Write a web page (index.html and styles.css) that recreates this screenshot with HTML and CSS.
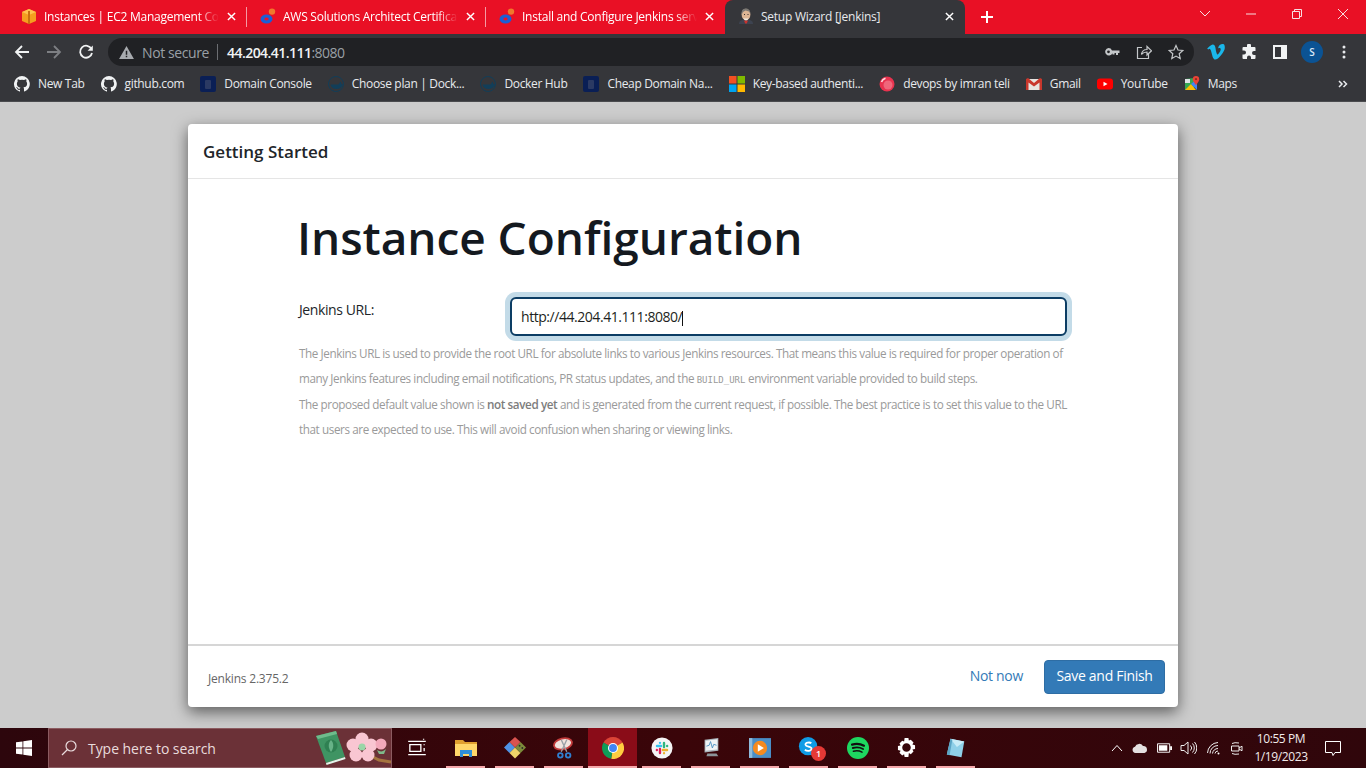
FILE: index.html
```html
<!DOCTYPE html>
<html lang="en">
<head>
<meta charset="utf-8">
<title>Setup Wizard [Jenkins]</title>
<link rel="stylesheet" href="styles.css">
</head>
<body>
<div class="browser">
  <div class="tabbar">
    <div class="tab">
      <svg class="fav" viewBox="0 0 16 16"><path fill="#f59e1f" d="M1 4l7-3 7 3v9l-7 3-7-3z"/><path fill="#ffc14d" d="M1 4l7-3 7 3-7 3z"/><path fill="#c9700f" d="M7 3h2v13H7z"/></svg>
      <span class="tab-title">Instances | EC2 Management Console</span>
      <svg class="tab-x" viewBox="0 0 10 10"><path d="M1 1l8 8M9 1l-8 8"/></svg>
    </div>
    <i class="tab-sep"></i>
    <div class="tab">
      <svg class="fav" viewBox="0 0 16 16"><ellipse cx="6.500" cy="11" rx="6" ry="4.600" fill="#1a5fd6"/><ellipse cx="6.500" cy="11" rx="2.200" ry="1.400" fill="#e9122a"/><circle cx="12" cy="3.600" r="3.200" fill="#f0772b"/></svg>
      <span class="tab-title">AWS Solutions Architect Certification Training</span>
      <svg class="tab-x" viewBox="0 0 10 10"><path d="M1 1l8 8M9 1l-8 8"/></svg>
    </div>
    <i class="tab-sep"></i>
    <div class="tab">
      <svg class="fav" viewBox="0 0 16 16"><ellipse cx="6.500" cy="11" rx="6" ry="4.600" fill="#1a5fd6"/><ellipse cx="6.500" cy="11" rx="2.200" ry="1.400" fill="#e9122a"/><circle cx="12" cy="3.600" r="3.200" fill="#f0772b"/></svg>
      <span class="tab-title">Install and Configure Jenkins server</span>
      <svg class="tab-x" viewBox="0 0 10 10"><path d="M1 1l8 8M9 1l-8 8"/></svg>
    </div>
    <div class="tab tab-active">
      <svg class="fav" viewBox="0 0 16 16"><path fill="#3d4350" d="M1 16c0-3 2-4.500 7-4.500s7 1.500 7 4.500z"/><path fill="#c8322d" d="M6 12.500h4l-1.200 3H7.200z"/><ellipse cx="8" cy="6.500" rx="4.400" ry="5.800" fill="#dcb594"/><path fill="#7d7a75" d="M3.600 7C3.300 3 4.500.8 7.500.6 10.500.5 12.400 2.500 12.400 6L11 3.500 7.500 2.500 5 4z"/><path fill="#efe8dd" d="M5.500 10c1.500.8 3.500.8 5 0-.4 1.800-1.100 2.300-2.500 2.300S5.900 11.800 5.500 10z"/><path fill="#3a3330" d="M6 6h1v1H6zM9.500 6h1v1h-1z"/></svg>
      <span class="tab-title tab-title-full">Setup Wizard [Jenkins]</span>
      <svg class="tab-x" viewBox="0 0 10 10"><path d="M1 1l8 8M9 1l-8 8"/></svg>
    </div>
    <svg class="new-tab" viewBox="0 0 14 14"><path d="M7 1v12M1 7h12"/></svg>
    <div class="win-controls">
      <svg class="win" viewBox="0 0 46 14"><path d="M18 4l5 5 5-5"/></svg>
      <svg class="win" viewBox="0 0 46 14"><path d="M18 7h10"/></svg>
      <svg class="win" viewBox="0 0 46 14"><path d="M18.500 4.500h7v7h-7zM20.500 4.500v-2h7v7h-2"/></svg>
      <svg class="win" viewBox="0 0 46 14"><path d="M18 2l10 10M28 2L18 12"/></svg>
    </div>
  </div>

  <div class="toolbar">
    <svg class="nav" viewBox="0 0 16 16"><path d="M15 8H2M8 2L2 8l6 6"/></svg>
    <svg class="nav nav-off" viewBox="0 0 16 16"><path d="M1 8h13M8 2l6 6-6 6"/></svg>
    <svg class="nav" viewBox="0 0 16 16"><path d="M13.500 5A6 6 0 1 0 14 9"/><path class="solid" d="M14.800 1.500v5.200H9.600z"/></svg>
    <div class="omnibox">
      <svg class="warn" viewBox="0 0 16 14"><path fill-rule="evenodd" d="M8 0l8 14H0zM7.200 5v4.500h1.600V5zm0 5.500V12h1.600v-1.500z"/></svg>
      <span class="not-secure">Not secure</span>
      <i class="omni-sep"></i>
      <span class="url">44.204.41.111<span class="url-port">:8080</span></span>
      <span class="omni-icons">
        <svg viewBox="0 0 16 16" class="omni-i"><path class="solid" fill-rule="evenodd" d="M4.500 4a3.800 3.800 0 0 1 3.500 2.400h7.500V9H14v2h-2V9h-1.500v1.500h-2V9.300A3.800 3.800 0 1 1 4.500 4zm0 2.400a1.400 1.400 0 1 0 0 2.800 1.400 1.400 0 0 0 0-2.800z"/></svg>
        <svg viewBox="0 0 16 16" class="omni-i"><path class="line" d="M6 3.500H1.500v11h11V10"/><path class="line" d="M5.500 10.500C6 7 8.500 5.500 11 5.500V2.500l4.500 4.300-4.500 4.200V8C9 8 7 8.500 5.500 10.500z"/></svg>
        <svg viewBox="0 0 16 16" class="omni-i"><path class="line" d="M8 1.500l2 4.500 4.800.5-3.600 3.200 1 4.800L8 12.100l-4.200 2.400 1-4.800L1.200 6.500 6 6z"/></svg>
      </span>
    </div>
    <svg class="ext" viewBox="0 0 18 16"><path fill="#1ab7ea" d="M17.800 4c-.1 1.700-1.300 4.100-3.600 7-2.400 3-4.400 4.500-6 4.500-1 0-1.900-.9-2.600-2.800L4.200 7.500C3.700 5.700 3.100 4.700 2.500 4.700c-.1 0-.6.300-1.400.9L.2 4.500C1.100 3.700 2 2.900 2.900 2.100 4.100 1 5 .5 5.600.4c1.500-.1 2.400.9 2.800 3 .4 2.300.6 3.700.8 4.300.4 1.900.9 2.800 1.400 2.800.4 0 1-.6 1.800-1.900.8-1.300 1.200-2.200 1.300-2.900.1-1.100-.3-1.600-1.300-1.600-.5 0-.9.100-1.400.3C11.800 1.300 13.500 0 16 .1c1.300 0 1.900 1.300 1.800 3.900z"/></svg>
    <svg class="ext2" viewBox="0 0 16 16"><path fill="#f1f3f4" d="M6 1.500a2 2 0 0 1 4 0V3h3.500a1 1 0 0 1 1 1v3H13a2 2 0 0 0 0 4h1.500v3a1 1 0 0 1-1 1H10v-1.500a2 2 0 0 0-4 0V15H2.500a1 1 0 0 1-1-1v-3.500H3a2 2 0 0 0 0-4H1.500V4a1 1 0 0 1 1-1H6z"/></svg>
    <svg class="ext3" viewBox="0 0 14 14"><path fill="#f1f3f4" fill-rule="evenodd" d="M0 0h14v14H0zM2 2v10h6V2z"/></svg>
    <span class="avatar">S</span>
    <svg class="kebab" viewBox="0 0 4 14"><circle cx="2" cy="2" r="1.500"/><circle cx="2" cy="7" r="1.500"/><circle cx="2" cy="12" r="1.500"/></svg>
  </div>

  <div class="bookmarks">
    <a class="bm"><svg class="bm-i" viewBox="0 0 16 16"><use href="#gh"/></svg>New Tab</a>
    <a class="bm"><svg class="bm-i" viewBox="0 0 16 16"><use href="#gh"/></svg>github.com</a>
    <a class="bm"><svg class="bm-i" viewBox="0 0 16 16"><use href="#dom"/></svg>Domain Console</a>
    <a class="bm"><svg class="bm-i" viewBox="0 0 16 16"><use href="#dock"/></svg>Choose plan | Dock...</a>
    <a class="bm"><svg class="bm-i" viewBox="0 0 16 16"><use href="#dock"/></svg>Docker Hub</a>
    <a class="bm"><svg class="bm-i" viewBox="0 0 16 16"><use href="#dom"/></svg>Cheap Domain Na...</a>
    <a class="bm"><svg class="bm-i" viewBox="0 0 16 16"><path fill="#f25022" d="M0 0h7.500v7.500H0z"/><path fill="#7fba00" d="M8.500 0H16v7.500H8.500z"/><path fill="#00a4ef" d="M0 8.500h7.500V16H0z"/><path fill="#ffb900" d="M8.500 8.500H16V16H8.500z"/></svg>Key-based authenti...</a>
    <a class="bm"><svg class="bm-i" viewBox="0 0 16 16"><circle cx="8" cy="8" r="7.500" fill="#e8334f"/><circle cx="9" cy="9" r="4.500" fill="#f0677b"/><path d="M2.500 6a6 6 0 0 1 4-3.800" stroke="#fde2e6" stroke-width="1.500" fill="none"/></svg>devops by imran teli</a>
    <a class="bm"><svg class="bm-i" viewBox="0 0 16 16"><path fill="#e8e4e0" d="M1 3h14v11H1z"/><path fill="#c9372c" d="M0 3l2-1 6 5 6-5 2 1v11h-2.500V6.500L8 10.500l-5.500-4V14H0z"/></svg>Gmail</a>
    <a class="bm"><svg class="bm-i" viewBox="0 0 16 16"><rect y="2.500" width="16" height="11" rx="3" fill="#f00"/><path fill="#fff" d="M6.500 5.700L10.500 8l-4 2.300z"/></svg>YouTube</a>
    <a class="bm"><svg class="bm-i" viewBox="0 0 16 16"><path fill="#34a853" d="M1 3l9-1v12H1z"/><path fill="#fbbc04" d="M1 14l6-6 5 6z"/><path fill="#4285f4" d="M7 8l6-5v11z"/><path fill="#dfe3e6" d="M1 3h5v4H1z"/><path fill="#ea4335" d="M12 0a3.200 3.200 0 0 1 3.200 3.200C15.200 5.500 12 9 12 9S8.800 5.500 8.800 3.200A3.200 3.200 0 0 1 12 0z"/><circle cx="12" cy="3.200" r="1.100" fill="#8e2a20"/></svg>Maps</a>
    <svg class="bm-more" viewBox="0 0 10 8"><path d="M1 1l3 3-3 3M5.500 1l3 3-3 3"/></svg>
  </div>
  <svg class="defs" width="0" height="0">
    <defs>
      <path id="gh" fill="#f1f3f4" d="M8 0a8 8 0 0 0-2.500 15.600c.4.100.5-.2.500-.4v-1.400c-2.200.5-2.700-1-2.700-1-.4-.9-.9-1.200-.9-1.200-.7-.5.100-.5.100-.5.800.1 1.200.8 1.200.8.700 1.200 1.900.9 2.300.7.100-.5.300-.9.500-1.100-1.800-.2-3.600-.9-3.600-4 0-.9.300-1.600.8-2.100-.1-.2-.4-1 .1-2.100 0 0 .7-.2 2.200.8a7.600 7.600 0 0 1 4 0c1.500-1 2.200-.8 2.200-.8.400 1.100.2 1.900.1 2.100.5.600.8 1.300.8 2.100 0 3.100-1.900 3.700-3.700 3.900.3.300.6.800.6 1.500v2.200c0 .2.100.5.600.4A8 8 0 0 0 8 0z"/>
      <g id="dom"><rect width="16" height="16" rx="2" fill="#0a1f55"/><rect x="5" y="4" width="6" height="9" rx="1" fill="#2b3a63"/></g>
      <g id="dock"><circle cx="8" cy="8" r="7.500" fill="none" stroke="#123e59" stroke-width="1"/><path fill="#123e59" d="M2.500 8.500h8l2-3 1 2.500 1.500.5c-1 3-3.500 4.500-6.500 4.500-3 0-5.500-1.500-6-4.500z"/></g>
    </defs>
  </svg>

  <main class="page">
    <section class="dialog">
      <header class="dlg-head">Getting Started</header>
      <div class="dlg-body">
        <h1 class="dlg-title">Instance Configuration</h1>
        <div class="url-row">
          <label class="url-label" for="jurl">Jenkins URL:</label>
          <div class="url-field">
            <input class="url-input" id="jurl" value="http://44.204.41.111:8080/">
            <i class="caret"></i>
          </div>
        </div>
        <div class="help">
          <p>The Jenkins URL is used to provide the root URL for absolute links to various Jenkins resources. That means this value is required for proper operation of many Jenkins features including email notifications, PR status updates, and the <code>BUILD_URL</code> environment variable provided to build steps.</p>
          <p>The proposed default value shown is <strong>not saved yet</strong> and is generated from the current request, if possible. The best practice is to set this value to the URL that users are expected to use. This will avoid confusion when sharing or viewing links.</p>
        </div>
      </div>
      <footer class="dlg-foot">
        <span class="version">Jenkins 2.375.2</span>
        <a class="not-now">Not now</a>
        <button class="save">Save and Finish</button>
      </footer>
    </section>
  </main>

  <div class="taskbar">
    <svg class="start" viewBox="0 0 16 16"><path fill="#fff" d="M0 2.300l6.500-.9v6.200H0zM7.300 1.300L16 0v7.600H7.300zM0 8.400h6.500v6.200L0 13.700zM7.300 8.400H16V16l-8.700-1.300z"/></svg>
    <div class="search">
      <svg class="search-i" viewBox="0 0 16 16"><circle cx="10" cy="6" r="5"/><path d="M6.500 9.500L1 15"/></svg>
      <span class="search-t">Type here to search</span>
      <svg class="search-art" viewBox="0 0 76 36"><path d="M52 24l12 6 12 2" stroke="#a5743f" stroke-width="3" fill="none"/><path fill="#3f9463" d="M1 6l20-5 9 26-19 6z"/><path fill="#6fbb8c" d="M1 6l20-5 1 3-19 5z"/><path fill="#e3f5ea" d="M11 33l19-6 .5 2-19 6z"/><circle cx="16" cy="16" r="6.500" fill="#2f8052"/><path fill="#67b287" d="M16 10c3 3 3 8 0 12-3-4-3-9 0-12z"/><g fill="#f9c6d2"><circle cx="47" cy="9" r="6.500"/><circle cx="56" cy="15" r="6.500"/><circle cx="53" cy="25" r="6.500"/><circle cx="41" cy="25" r="6.500"/><circle cx="38" cy="15" r="6.500"/></g><circle cx="47" cy="17" r="3.500" fill="#9ad6a8"/><circle cx="66" cy="14" r="5.500" fill="#f3a9bb"/><path fill="#7fb98a" d="M62 20c3 2 6 2 9-1l-2 5h-5z"/></svg>
    </div>
    <div class="apps">
      <span class="app"><svg viewBox="0 0 20 20"><path class="tl" d="M2 4h16M2 16h16M3.500 7h10v6h-10zM16.500 6.500v1M16.500 10v3M16 1.500v1"/></svg></span>
      <span class="app on"><svg viewBox="0 0 22 20"><path fill="#e0a030" d="M0 2h8l2 2h12v14H0z"/><path fill="#ffd76a" d="M0 6h22v12H0z"/><path fill="#2f8fd8" d="M5 12h12v7h-3v-3H8v3H5z"/></svg></span>
      <span class="app on"><svg viewBox="0 0 24 24"><path fill="#4f93e6" d="M0 11.500L6 5.500l6 6-6 6z"/><path fill="#f0d469" d="M6 17.500l6-6 6 6-6 6z"/><path fill="#7c8a3a" d="M12 11.500l6-6 6 6-6 6z"/><path fill="#d9534f" d="M6 5.500l6-5.500 6 5.500-6 6z"/><circle cx="17" cy="9.500" r="1" fill="#2a2a2a"/><circle cx="20" cy="12" r="1" fill="#2a2a2a"/></svg></span>
      <span class="app on"><svg viewBox="0 0 24 24"><g transform="rotate(-14 11 8)"><ellipse cx="11" cy="7.500" rx="10" ry="6" fill="#f1e4df" stroke="#c23b3b" stroke-width="2"/></g><path d="M9 3l6 13M15 3L9 16" stroke="#9aa0a6" stroke-width="1.500"/><circle cx="8" cy="20" r="2.500" fill="none" stroke="#2f7fd0" stroke-width="2"/><circle cx="16.500" cy="20" r="2.500" fill="none" stroke="#2f7fd0" stroke-width="2"/></svg></span>
      <span class="app on active"><svg viewBox="0 0 24 24"><path fill="#db4437" d="M12 12L1.610 6A12 12 0 0 1 22.390 6z"/><path fill="#ffcd40" d="M12 12L22.390 6A12 12 0 0 1 10 23.830z"/><path fill="#0f9d58" d="M12 12L10 23.830A12 12 0 0 1 1.610 6z"/><circle cx="12" cy="12" r="5.500" fill="#fff"/><circle cx="12" cy="12" r="4.300" fill="#4285f4"/></svg></span>
      <span class="app on"><svg viewBox="0 0 24 24"><circle cx="12" cy="12" r="11.500" fill="#f5f5f5"/><g stroke-width="2.600" stroke-linecap="round" fill="none"><path stroke="#36c5f0" d="M6.500 9.800H11M9.800 6.400v0"/><path stroke="#2eb67d" d="M14.200 6.500V11M17.600 9.800h0"/><path stroke="#ecb22e" d="M13 14.200h4.500M14.200 17.600h0"/><path stroke="#e01e5a" d="M9.800 13v4.500M6.400 14.200h0"/></g></svg></span>
      <span class="app on"><svg viewBox="0 0 24 24"><path fill="#aab4bb" d="M5 3l15-2v14l-15 2z"/><path fill="#f0f3f5" d="M6 4l13-1.500v11L6 15z"/><path d="M7 10l3-1 1.500-4 2 7 1.500-4 3 1" fill="none" stroke="#4a90c2"/><path fill="#8c9499" d="M8 18h10l2 3H7z"/></svg></span>
      <span class="app on"><svg viewBox="0 0 20 20"><path fill="#4a8ec7" d="M0 1h20v18H0z"/><path fill="#8fbbdc" d="M0 1h3v18H0z"/><circle cx="10" cy="10" r="6.500" fill="#f58a1f"/><path fill="#fff" d="M8 6.500l5.500 3.500L8 13.500z"/></svg></span>
      <span class="app on"><svg viewBox="0 0 24 24"><circle cx="11" cy="10" r="10" fill="#0f9ce6"/><path d="M14.500 6.800C13 5.500 7.500 5.800 8.200 8.600c.6 2.500 6.600 1.400 6.600 4.300 0 2.500-5 3-7.300 1" fill="none" stroke="#fff" stroke-width="2"/></svg><b class="badge">1</b></span>
      <span class="app on"><svg viewBox="0 0 24 24"><circle cx="12" cy="12" r="12" fill="#1ed760"/><g fill="none" stroke="#111" stroke-linecap="round"><path stroke-width="2.400" d="M5.500 8.300c4.500-1.300 9-1 13 1.200"/><path stroke-width="2" d="M6.300 12c3.800-1 7.800-.8 11.200 1.100"/><path stroke-width="1.600" d="M7 15.500c3.200-.8 6.500-.6 9.400 1"/></g></svg></span>
      <span class="app on"><svg class="gear" viewBox="0 0 20 20"><path fill="#fff" fill-rule="evenodd" d="M8 0h4l.5 2.700 2-.8 2.900 2.900-1.200 2 2.800.7v4l-2.800.7 1.200 2-2.900 2.900-2-1.200L12 20H8l-.5-2.800-2 1.200-2.900-2.900 1.200-2L1 12.500v-4l2.800-.7-1.200-2 2.900-2.900 2 .8zM10 5.500a4.500 4.500 0 1 0 0 9 4.500 4.500 0 0 0 0-9z"/></svg></span>
      <span class="app on"><svg viewBox="0 0 24 24"><path fill="#8fd0e8" d="M6 2l15 3-3 17L2 19z"/><path fill="#c8ecf7" d="M6 2l15 3-8 6z"/><path fill="#5aa5c5" d="M2 19l4-17 2 1-3 17z"/></svg></span>
    </div>
    <div class="tray">
      <svg class="t-chev" viewBox="0 0 12 8"><path d="M1 7l5-5.500L11 7"/></svg>
      <svg class="t-cloud" viewBox="0 0 16 10"><path fill="#e4e0e0" d="M3.500 10a3.200 3.200 0 0 1-.5-6.300A4.500 4.500 0 0 1 11 3a3.600 3.600 0 0 1 1.500 7z"/></svg>
      <svg class="t-batt" viewBox="0 0 16 10"><path fill="none" stroke="#fff" d="M.500.500h13v9H.500z"/><path fill="#fff" d="M2 2h9v6H2zM14 3h2v4h-2z"/></svg>
      <svg class="t-line t-vol" viewBox="0 0 17 14"><path d="M1 4.500h3L8 1v12L4 9.500H1zM10.500 4.500a3.500 3.500 0 0 1 0 5M12.500 2.500a6.500 6.500 0 0 1 0 9M14.500 1a9 9 0 0 1 0 12"/></svg>
      <svg class="t-line t-wifi" viewBox="0 0 14 13"><path d="M.500 11A11 11 0 0 1 11 .500M3 11.500A8 8 0 0 1 11 3.500M5.500 11.500A5.500 5.500 0 0 1 11 6.500M8 11.500A3 3 0 0 1 11 9"/><circle cx="11.500" cy="11.500" r="1" fill="#fff" stroke="none"/></svg>
      <svg class="t-line t-cam" viewBox="0 0 13 17"><path d="M2 3.500A5 1.500 0 0 1 9 3M2 13.500a5 1.500 0 0 0 7 .5M1.500 6h7.500v5H1.500zM9 8l3-1.800v4.600L9 9"/></svg>
      <div class="clock"><span>10:55 PM</span><span>1/19/2023</span></div>
      <svg class="t-line t-notif" viewBox="0 0 16 15"><path d="M.500.500h15v11H10L8 14.500 7 11.500H.500z"/></svg>
    </div>
  </div>
</div>
</body>
</html>
```

FILE: styles.css
```css
* { box-sizing: border-box; }
html, body { margin: 0; height: 100%; overflow: hidden; }
body { font-family: "Open Sans", "Noto Sans", "Liberation Sans", sans-serif; background: #ccc; }
.browser { width: 1366px; height: 768px; display: flex; flex-direction: column; }

/* tab strip */
.tabbar { height: 34px; flex: none; background: #e91025; display: flex; align-items: stretch; padding-left: 8px; }
.tab { width: 239px; flex: none; display: flex; align-items: center; padding: 0 9px 2px 13px; color: #fff; font-size: 12px; letter-spacing: -0.25px; }
.tab-active { width: 240px; background: #35363a; border-radius: 8px 8px 0 0; color: #e8eaed; }
.fav { width: 16px; height: 16px; flex: none; margin-right: 7px; }
.tab-title { flex: 1; min-width: 0; white-space: nowrap; overflow: hidden; -webkit-mask-image: linear-gradient(90deg, #000 88%, transparent); mask-image: linear-gradient(90deg, #000 88%, transparent); }
.tab-title-full { -webkit-mask-image: none; mask-image: none; }
.tab-x { width: 9px; height: 9px; flex: none; margin-left: 8px; margin-right: 2px; }
.tab-x path { stroke: #fff; stroke-width: 1.600; fill: none; }
.tab-sep { width: 1px; height: 20px; flex: none; align-self: center; background: #f49aa3; margin: 0 0 0 -1px; }
.new-tab { width: 14px; height: 14px; flex: none; align-self: center; margin-left: 15px; }
.new-tab path { stroke: #fff; stroke-width: 2; fill: none; }
.win-controls { margin-left: auto; display: flex; align-items: flex-start; padding-top: 7px; }
.win { width: 46px; height: 14px; }
.win path { stroke: #f7dfe2; stroke-width: 1; fill: none; }

/* toolbar */
.toolbar { height: 32px; flex: none; background: #35363a; display: flex; align-items: center; padding: 4px 0 0 14px; }
.nav { width: 16px; height: 16px; flex: none; margin-right: 16px; }
.nav path { stroke: #f1f3f4; stroke-width: 1.800; fill: none; }
.nav path.solid { fill: #f1f3f4; stroke: none; }
.nav-off path { stroke: #7d7f83; }
.omnibox { width: 1086px; height: 28px; flex: none; margin-left: -2px; background: #202124; border-radius: 14px; display: flex; align-items: center; padding: 0 10px 0 11px; font-size: 14px; }
.warn { width: 15px; height: 13px; flex: none; fill: #a8abaf; margin-right: 8px; }
.not-secure { color: #9aa0a6; letter-spacing: -0.4px; }
.omni-sep { width: 1px; height: 16px; background: #6c6e72; margin: 0 9px 0 8px; }
.url { color: #f1f3f4; font-weight: 600; letter-spacing: -0.55px; }
.url-port { color: #9aa0a6; font-weight: 400; }
.omni-icons { margin-left: auto; display: flex; gap: 16px; align-items: center; }
.omni-i { width: 16px; height: 16px; }
.omni-i .solid { fill: #c4c7c9; }
.omni-i .line { fill: none; stroke: #c4c7c9; stroke-width: 1.200; }
.ext { width: 18px; height: 16px; flex: none; margin-left: 13px; }
.ext2 { width: 16px; height: 16px; flex: none; margin-left: 16px; }
.ext3 { width: 14px; height: 14px; flex: none; margin-left: 16px; }
.avatar { width: 22px; height: 22px; flex: none; margin-left: 14px; border-radius: 50%; background: #0b5394; color: #dbe9f7; font-size: 10px; font-weight: 600; display: flex; align-items: center; justify-content: center; }
.kebab { width: 4px; height: 14px; flex: none; margin-left: 19px; fill: #e8eaed; }

/* bookmarks */
.bookmarks { height: 36px; flex: none; background: #35363a; border-bottom: 1px solid #4a4b4e; display: flex; align-items: center; gap: 16px; padding: 0 0 0 14px; font-size: 12px; color: #e8eaed; letter-spacing: -0.33px; }
.bm { display: flex; align-items: center; gap: 8px; white-space: nowrap; }
.bm-i { width: 16px; height: 16px; flex: none; }
.bm-more { width: 10px; height: 8px; margin-left: auto; margin-right: 18px; }
.bm-more path { fill: none; stroke: #e8eaed; stroke-width: 1.500; }
.defs { position: absolute; }

/* page */
.page { flex: 1; min-height: 0; background: #ccc; padding: 22px 188px 21px; }
.dialog { height: 583px; background: #fff; border-radius: 4px; box-shadow: 0 5px 15px rgba(0,0,0,.55); display: flex; flex-direction: column; color: #212529; }
.dlg-head { height: 55px; flex: none; border-bottom: 1px solid #e5e5e5; padding: 16px 15px 0; font-size: 17px; font-weight: 560; line-height: 24px; }
.dlg-body { flex: 1; padding: 26px 111px 0; }
.dlg-title { margin: 0 0 0 -2px; font-size: 46px; line-height: 64px; font-weight: 560; letter-spacing: -0.05px; color: #14191f; }
.url-row { display: flex; margin-top: 28px; }
.url-label { width: 211px; flex: none; font-size: 14px; line-height: 20px; padding-top: 3px; letter-spacing: -0.4px; }
.url-field { position: relative; flex: none; }
.url-input { display: block; width: 557px; height: 39px; margin: 0; border: 2px solid #0c3d64; border-radius: 6px; box-shadow: 0 0 0 5px #c3dbe8; padding: 0 9px; font: 400 14px "Open Sans", sans-serif; letter-spacing: -0.45px; color: #1d1f21; outline: none; }
.caret { position: absolute; left: 172px; top: 14px; width: 1px; height: 15px; background: #111; }
.help { margin-top: 5px; width: 770px; font-size: 11.700px; line-height: 25.400px; color: #9a9a9a; letter-spacing: -0.41px; }
.help p { margin: 0; }
.help code { font-family: "DejaVu Sans Mono", monospace; font-size: 9px; letter-spacing: 0; line-height: 0; }
.help strong { color: #7d7d7d; font-weight: 600; }
.dlg-foot { height: 63px; flex: none; border-top: 2px solid #d6d6d6; display: flex; align-items: center; padding: 0 13px 0 20px; font-size: 14px; }
.version { font-size: 12px; color: #666; margin-right: auto; margin-top: 4px; letter-spacing: -0.2px; }
.not-now { color: #337ab7; margin-right: 21px; letter-spacing: -0.3px; margin-bottom: 2px; }
.save { width: 121px; height: 34px; background: #337ab7; color: #fff; border: 1px solid #2e6da4; border-radius: 4px; font: 400 14px "Open Sans", sans-serif; letter-spacing: -0.3px; padding: 0 0 2px; }

/* taskbar */
.taskbar { height: 40px; flex: none; background: linear-gradient(90deg, #2d060c, #3a0509 50%, #30060b); display: flex; align-items: stretch; color: #fff; }
.start { width: 16px; height: 16px; flex: none; align-self: center; margin: 0 16px; }
.search { width: 344px; flex: none; background: #6b3137; border: 1px solid #8b5b60; display: flex; align-items: center; padding-left: 12px; font-size: 14px; color: #e9dcdd; }
.search-i { width: 16px; height: 16px; flex: none; margin-right: 11px; fill: none; stroke: #e9dcdd; stroke-width: 1.200; }
.search-t { letter-spacing: -0.05px; }
.search-art { width: 76px; height: 36px; margin-left: auto; }
.apps { display: flex; }
.app { width: 49px; display: flex; align-items: center; justify-content: center; position: relative; padding-bottom: 1px; }
.app svg { width: 22px; height: 22px; }
.app svg.gear { width: 19px; height: 19px; }
.app.on::after { content: ""; position: absolute; left: 5px; right: 5px; bottom: 0; height: 2px; background: #f5a8ab; }
.app.active { background: #8a0c18; }
.app.active::after { left: 0; right: 0; }
.tl { fill: none; stroke: #fff; stroke-width: 1.200; }
.badge { position: absolute; left: 27px; top: 18px; width: 15px; height: 15px; border-radius: 50%; background: #e53935; color: #fff; font-size: 9px; font-weight: 600; display: flex; align-items: center; justify-content: center; }
.tray { margin-left: auto; display: flex; align-items: center; }
.tray svg { flex: none; }
.t-chev { width: 12px; height: 8px; fill: none; stroke: #fff; stroke-width: 1; margin-right: 9px; }
.t-cloud { width: 16px; height: 10px; margin-right: 9px; }
.t-batt { width: 15px; height: 10px; margin-right: 8px; }
.t-line { fill: none; stroke: #eee; stroke-width: 1; }
.t-vol { width: 17px; height: 14px; margin-right: 10px; }
.t-wifi { width: 14px; height: 13px; margin-right: 9px; }
.t-cam { width: 13px; height: 17px; margin-right: 7px; }
.clock { width: 62px; display: flex; flex-direction: column; align-items: center; font-size: 12px; line-height: 18px; letter-spacing: -0.4px; color: #f2eaea; }
.t-notif { width: 16px; height: 15px; margin: 0 25px 0 13px; stroke: #fff; }
```
